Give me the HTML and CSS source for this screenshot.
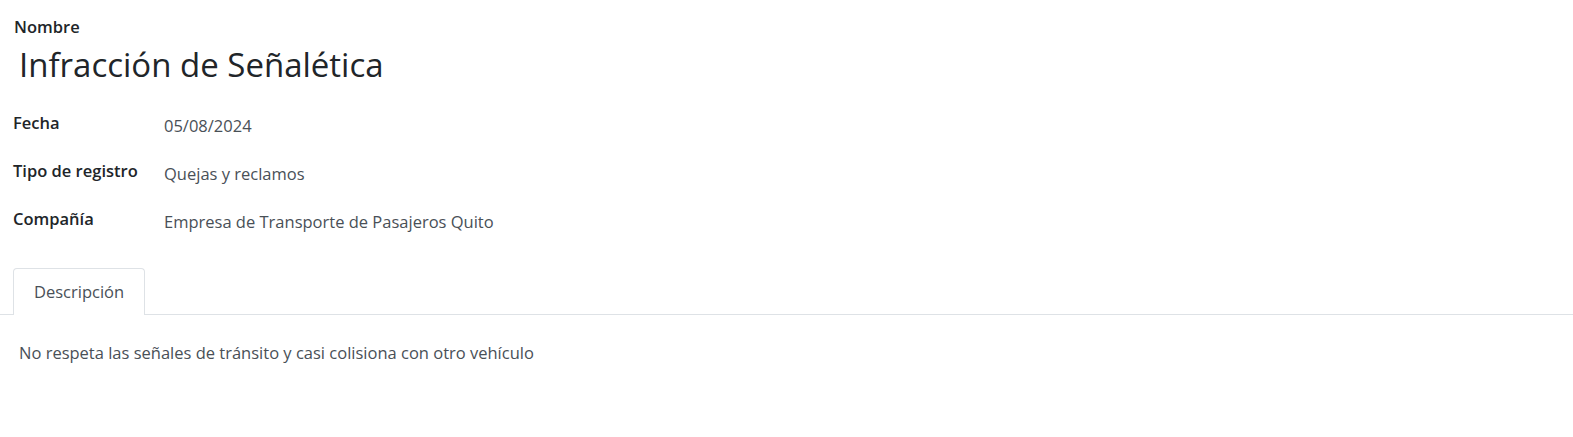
FILE: index.html
```html
<!DOCTYPE html>
<html lang="es">
<head>
  <meta charset="UTF-8" />
  <title>Infracción de Señalética</title>
  <link rel="stylesheet" href="styles.css">
</head>
<body>
  <div class="sheet">
    <div class="title-block">
      <label class="title-label">Nombre</label>
      <h1 class="record-name">Infracción de Señalética</h1>
    </div>

    <div class="fields">
      <div class="field-row">
        <div class="field-label">Fecha</div>
        <div class="field-value">05/08/2024</div>
      </div>
      <div class="field-row">
        <div class="field-label">Tipo de registro</div>
        <div class="field-value">Quejas y reclamos</div>
      </div>
      <div class="field-row">
        <div class="field-label">Compañía</div>
        <div class="field-value">Empresa de Transporte de Pasajeros Quito</div>
      </div>
    </div>

    <div class="tabs">
      <div class="tab active">Descripción</div>
    </div>
    <div class="tab-content">
      <p>No respeta las señales de tránsito y casi colisiona con otro vehículo</p>
    </div>
  </div>
</body>
</html>
```

FILE: styles.css
```css
* {
  box-sizing: border-box;
}

body {
  margin: 0;
  font-family: "Open Sans", "Noto Sans", sans-serif;
  font-size: 16.5px;
  line-height: 22.5px;
  color: #212529;
  background: #fff;
}

.sheet {
  padding: 16px 0 0 0;
}

.title-block {
  padding: 0 13px;
}

.title-label {
  display: block;
  font-weight: 600;
  padding-left: 1px;
}

.record-name {
  margin: 6px 0 0 0;
  font-size: 33px;
  font-weight: 400;
  line-height: 40px;
  padding-left: 6px;
}

.fields {
  padding: 27px 13px 0 13px;
}

.field-row {
  display: flex;
  height: 48px;
}

.field-label {
  width: 151px;
  font-weight: 600;
}

.field-value {
  color: #495057;
  padding-top: 3px;
}

.tabs {
  margin-top: 12px;
  padding-left: 13px;
  border-bottom: 1px solid #dee2e6;
  display: flex;
}

.tab {
  padding: 12px 20px 10px 20px;
  border: 1px solid #dee2e6;
  border-bottom: none;
  border-radius: 4px 4px 0 0;
  color: #495057;
  margin-bottom: -1px;
  background: #fff;
  height: 47px;
}

.tab-content {
  padding: 0 19px;
}

.tab-content p {
  margin: 27px 0 0 0;
  color: #495057;
}
```
